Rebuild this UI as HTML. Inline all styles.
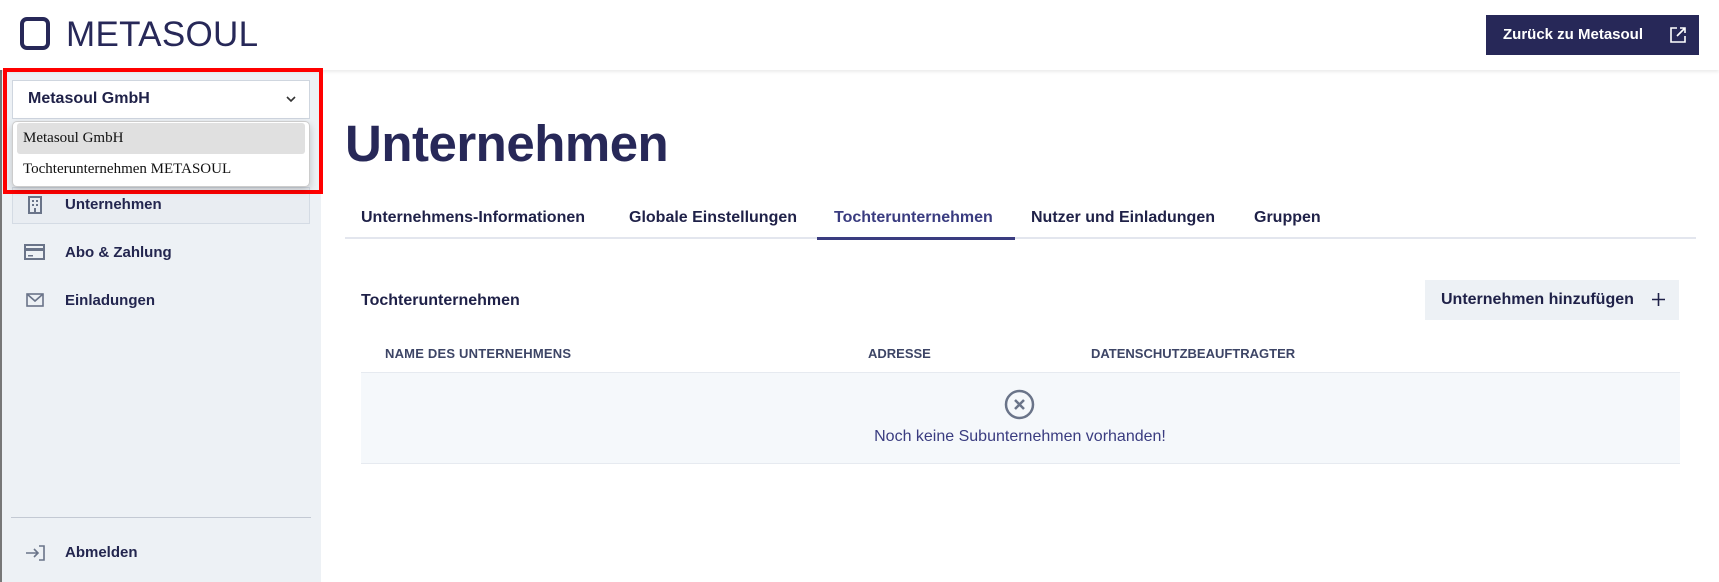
<!DOCTYPE html>
<html><head><meta charset="utf-8"><style>
*{box-sizing:border-box;margin:0;padding:0}
body{width:1719px;height:582px;overflow:hidden;background:#fff;font-family:"Liberation Sans",sans-serif;color:#1f2148;position:relative}
.abs{position:absolute}
.side{left:0;top:70px;width:321px;height:512px;background:#edf1f5;border-left:2px solid #777}
.hdr{left:0;top:0;width:1719px;height:70px;background:#fff;box-shadow:0 2px 3px rgba(0,0,0,0.08);z-index:2}
.b{font-weight:bold}
.nav{font-size:15px;font-weight:bold;color:#23264f}
.tab{top:209px;font-size:16px;font-weight:bold;color:#1f2148}
</style></head><body>
<div class="abs side"></div>
<div class="abs hdr">
  <div class="abs" style="left:20px;top:17px;width:30px;height:33px;border:4px solid #272858;border-radius:7px"></div>
  <div class="abs" style="left:66px;top:15px;font-size:35px;color:#272858;letter-spacing:0.3px">METASOUL</div>
  <div class="abs" style="left:1486px;top:15px;width:213px;height:40px;background:#272858;color:#fff;font-size:15px;font-weight:bold;line-height:40px;padding-left:17px">Zurück zu Metasoul
    <svg class="abs" style="left:183px;top:11px" width="18" height="18" viewBox="0 0 18 18" fill="none" stroke="#fff" stroke-width="1.6"><path d="M8 2H2v14h14v-6M11 2h5v5M16 2L8 10"/></svg>
  </div>
</div>
<div class="abs" style="left:12px;top:187px;width:298px;height:37px;background:#e9edf2;border:1px solid #d4dbe4"></div>
<svg class="abs" style="left:28px;top:196px" width="14" height="18" viewBox="0 0 14 18"><rect x="1" y="1" width="12" height="16" fill="none" stroke="#6a7489" stroke-width="2"/><rect x="4" y="4" width="2" height="2" fill="#6a7489"/><rect x="8" y="4" width="2" height="2" fill="#6a7489"/><rect x="4" y="8" width="2" height="2" fill="#6a7489"/><rect x="8" y="8" width="2" height="2" fill="#6a7489"/><rect x="6" y="12" width="2" height="5" fill="#6a7489"/></svg>
<div class="abs nav" style="left:65px;top:196px">Unternehmen</div>
<svg class="abs" style="left:24px;top:244px" width="21" height="16" viewBox="0 0 21 16"><rect x="1" y="1" width="19" height="14" fill="none" stroke="#6a7489" stroke-width="2"/><rect x="1" y="4" width="19" height="3" fill="#6a7489"/><rect x="4" y="11" width="5" height="1.5" fill="#6a7489"/></svg>
<div class="abs nav" style="left:65px;top:244px">Abo &amp; Zahlung</div>
<svg class="abs" style="left:26px;top:293px" width="18" height="14" viewBox="0 0 18 14" fill="none" stroke="#6a7489" stroke-width="1.6"><rect x="1" y="1" width="16" height="12"/><path d="M1 1l8 7 8-7"/></svg>
<div class="abs nav" style="left:65px;top:292px">Einladungen</div>
<div class="abs" style="left:11px;top:517px;width:300px;height:1px;background:#c3c9d3"></div>
<svg class="abs" style="left:25px;top:545px" width="21" height="16" viewBox="0 0 21 16" fill="none" stroke="#6a7489" stroke-width="1.6"><path d="M1 8h12M9 4l4 4-4 4M14 1h5v14h-5"/></svg>
<div class="abs nav" style="left:65px;top:544px">Abmelden</div>
<div class="abs" style="left:3px;top:68px;width:320px;height:126px;border:4px solid #f00;z-index:3"></div>
<div class="abs" style="left:12px;top:80px;width:298px;height:39px;background:#fff;border:1px solid #cfd6df;z-index:3"></div>
<div class="abs b" style="left:28px;top:90px;font-size:16px;color:#1f2148;z-index:4">Metasoul GmbH</div>
<svg class="abs" style="left:286px;top:96px;z-index:4" width="10" height="7" viewBox="0 0 10 7" fill="none" stroke="#333" stroke-width="1.6"><path d="M1 1l4 4 4-4"/></svg>
<div class="abs" style="left:12px;top:121px;width:298px;height:66px;background:#fff;border:1px solid #ccc;border-radius:5px;box-shadow:0 3px 8px rgba(0,0,0,0.2);z-index:4">
  <div style="margin:1px 4px 0;height:31px;background:#e0e0e0;border-radius:3px;font-family:'Liberation Serif',serif;font-size:15px;line-height:31px;padding-left:6px;color:#111">Metasoul GmbH</div>
  <div style="font-family:'Liberation Serif',serif;font-size:15px;line-height:30px;padding-left:10px;color:#111">Tochterunternehmen METASOUL</div>
</div>
<div class="abs b" style="left:345px;top:114px;font-size:51px;color:#272858;letter-spacing:-0.5px">Unternehmen</div>
<div class="abs tab" style="left:361px">Unternehmens-Informationen</div>
<div class="abs tab" style="left:629px">Globale Einstellungen</div>
<div class="abs tab" style="left:834px;color:#3a3c80">Tochterunternehmen</div>
<div class="abs tab" style="left:1031px">Nutzer und Einladungen</div>
<div class="abs tab" style="left:1254px">Gruppen</div>
<div class="abs" style="left:345px;top:237px;width:1351px;height:2px;background:#e3e6ee"></div>
<div class="abs" style="left:817px;top:237px;width:198px;height:3px;background:#3a3c80"></div>
<div class="abs b" style="left:361px;top:292px;font-size:16px">Tochterunternehmen</div>
<div class="abs b" style="left:1425px;top:280px;width:254px;height:40px;background:#edf1f5;font-size:16px;line-height:40px;padding-left:16px">Unternehmen hinzufügen
  <svg class="abs" style="left:227px;top:13px" width="13" height="13" viewBox="0 0 13 13" stroke="#1f2148" stroke-width="1.6"><path d="M6.5 0v13M0 6.5h13"/></svg>
</div>
<div class="abs b" style="left:385px;top:346px;font-size:13px;color:#3d4566;letter-spacing:0.2px">NAME DES UNTERNEHMENS</div>
<div class="abs b" style="left:868px;top:346px;font-size:13px;color:#3d4566">ADRESSE</div>
<div class="abs b" style="left:1091px;top:346px;font-size:13px;color:#3d4566">DATENSCHUTZBEAUFTRAGTER</div>
<div class="abs" style="left:361px;top:372px;width:1319px;height:92px;background:#f5f8fb;border-top:1px solid #e6eaf0;border-bottom:1px solid #e6eaf0"></div>
<svg class="abs" style="left:1004px;top:389px" width="31" height="31" viewBox="0 0 31 31" fill="none" stroke="#6a7489" stroke-width="2.5"><circle cx="15.5" cy="15.5" r="13.5"/><path d="M11 11l9 9M20 11l-9 9"/></svg>
<div class="abs" style="left:0;width:2040px;top:428px;font-size:16px;color:#3a3c80;text-align:center">Noch keine Subunternehmen vorhanden!</div>
</body></html>
